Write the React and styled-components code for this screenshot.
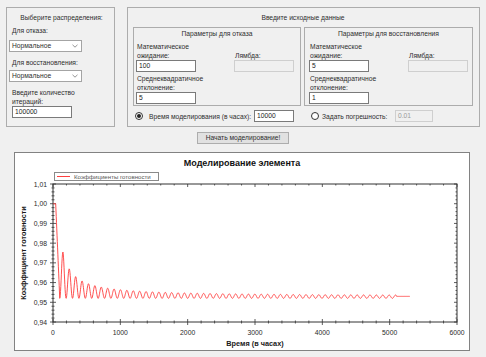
import React from "react"
import styled, { createGlobalStyle } from "styled-components"

const GlobalStyle = createGlobalStyle`
  html, body {
    margin: 0;
    padding: 0;
    background: #f0f0f0;
  }
  body {
    font-family: "Liberation Sans", Arial, sans-serif;
    font-size: 6.7px;
    color: #2e2e2e;
  }
`

const Window = styled.div`
  width: 486px;
  height: 357px;
  overflow: hidden;
  box-sizing: border-box;
  padding: 7px 6px 0 6px;
  display: flex;
  flex-direction: column;
`
const TopRow = styled.div`
  display: flex;
  gap: 12px;
  height: 120px;
`
const Group = styled.div`
  box-sizing: border-box;
  width: ${p => p.$w}px;
  height: 100%;
  border: 1px solid #acacac;
  display: flex;
  flex-direction: column;
  padding: 5px ${p => p.$pr || 0}px 0 ${p => p.$pl || 0}px;
`
const GroupTitle = styled.div`
  line-height: 9px;
  text-align: center;
  white-space: nowrap;
`
const Label = styled.div`
  line-height: ${p => p.$lh || 8.5}px;
  margin-top: ${p => p.$mt || 0}px;
  margin-left: ${p => p.$ml || 0}px;
  white-space: nowrap;
  align-self: ${p => p.$end ? "end" : "auto"};
`
const Combo = styled.div`
  box-sizing: border-box;
  width: 73px;
  height: 12px;
  margin-top: ${p => p.$mt || 0}px;
  background: #fff;
  border: 1px solid #a4a4a4;
  display: flex;
  align-items: center;
  justify-content: space-between;
  padding: 0 3px 0 2px;
  line-height: 10px;
`
const TextBox = styled.div`
  box-sizing: border-box;
  width: ${p => p.$w || 60}px;
  height: 12px;
  margin-top: ${p => p.$mt || 0}px;
  margin-left: ${p => p.$ml || 0}px;
  background: ${p => p.$disabled ? "#f0f0f0" : "#fff"};
  border: 1px solid ${p => p.$disabled ? "#cfcfcf" : "#7a7a7a"};
  color: ${p => p.$disabled ? "#9a9a9a" : "#1a1a1a"};
  padding-left: 2px;
  line-height: 10px;
  flex-shrink: 0;
`
const BoxRow = styled.div`
  display: flex;
  gap: 3px;
  margin-top: 5px;
`
const ParamBox = styled.div`
  box-sizing: border-box;
  width: ${p => p.$w}px;
  height: 79px;
  border: 1px solid #acacac;
  padding-top: 1px;
`
const BoxTitle = styled.div`
  line-height: 10px;
  text-align: center;
  white-space: nowrap;
`
const ParamGrid = styled.div`
  display: grid;
  grid-template-columns: 60px 60px;
  column-gap: ${p => p.$gap}px;
  margin-top: 4px;
  padding-left: ${p => p.$pl}px;
`
const GridLabel = styled(Label)`
  padding-left: 1px;
  grid-column: ${p => p.$col || 1};
`
const RadioRow = styled.div`
  display: grid;
  grid-template-columns: 168px 169px;
  column-gap: 3px;
  margin-top: 4px;
  height: 12px;
`
const RadioCell = styled.div`
  display: flex;
  align-items: center;
  padding-left: ${p => p.$pl}px;
`
const Radio = styled.span`
  box-sizing: border-box;
  width: 8px;
  height: 8px;
  border-radius: 50%;
  border: 1px solid #333;
  background: #fff;
  display: flex;
  align-items: center;
  justify-content: center;
  flex-shrink: 0;
  &::after {
    content: "";
    width: 4px;
    height: 4px;
    border-radius: 50%;
    background: ${p => p.$checked ? "#222" : "transparent"};
  }
`
const RadioText = styled.span`
  width: ${p => p.$w}px;
  margin-left: ${p => p.$gap}px;
  white-space: nowrap;
  flex-shrink: 0;
`
const ButtonRow = styled.div`
  display: flex;
  justify-content: center;
  margin-top: 5px;
`
const Button = styled.div`
  box-sizing: border-box;
  width: 92px;
  height: 12px;
  background: #e1e1e1;
  border: 1px solid #adadad;
  text-align: center;
  line-height: 10px;
  white-space: nowrap;
`
const ChartPanel = styled.div`
  box-sizing: border-box;
  margin: 8px 0 0 8px;
  width: 456px;
  height: 199px;
  border: 1px solid #828282;
  background: #fff;
  svg {
    display: block;
  }
`

function Chevron() {
  return (
    <svg width="6" height="4" viewBox="0 0 6 4">
      <path d="M0.5 0.8 L3 3.2 L5.5 0.8" fill="none" stroke="#7a7a7a" strokeWidth="0.8" />
    </svg>
  )
}

const PX0 = 38, PX1 = 442, PY0 = 31, PY1 = 169
const xs = t => PX0 + t / 6000 * (PX1 - PX0)
const ys = v => PY0 + (1.01 - v) / 0.07 * (PY1 - PY0)

function seriesPath() {
  const pts = []
  for (let t = 0; t <= 5300; t += 4) {
    let v
    if (t < 40) v = 1
    else if (t < 100) v = 1 - (t - 40) / 60 * 0.048
    else if (t > 5100) v = 0.953
    else {
      const A = 0.001 + 0.0225 * Math.pow(150 / Math.max(t, 150), 1.0)
      v = 0.952 + A * (1 - Math.cos(2 * Math.PI * (t - 100) / 95)) / 2
    }
    pts.push(`${xs(t).toFixed(2)},${ys(v).toFixed(2)}`)
  }
  return "M" + pts.join(" L")
}

function Chart() {
  const ticks = []
  for (let i = 0; i <= 35; i++) {
    const y = PY0 + i * (PY1 - PY0) / 35
    const l = i % 5 === 0 ? 3 : 1.5
    ticks.push(<line key={"yl" + i} x1={PX0 - l} x2={PX0 + l} y1={y} y2={y} />)
    ticks.push(<line key={"yr" + i} x1={PX1 - l} x2={PX1} y1={y} y2={y} />)
  }
  for (let i = 0; i <= 30; i++) {
    const x = PX0 + i * (PX1 - PX0) / 30
    const l = i % 5 === 0 ? 3 : 1.5
    ticks.push(<line key={"xb" + i} x1={x} x2={x} y1={PY1 - l} y2={PY1 + l} />)
    ticks.push(<line key={"xt" + i} x1={x} x2={x} y1={PY0} y2={PY0 + l} />)
  }
  const yLabels = ["1,01", "1,00", "0,99", "0,98", "0,97", "0,96", "0,95", "0,94"]
  return (
    <svg width="454" height="197" fontFamily='"Liberation Sans", Arial, sans-serif'>
      <text x="227" y="13" textAnchor="middle" fontSize="9" fontWeight="bold" fill="#111">Моделирование элемента</text>
      <rect x="39.5" y="19.5" width="104" height="8" fill="#fff" stroke="#8a8a8a" strokeWidth="1" />
      <line x1="42" x2="55" y1="23.5" y2="23.5" stroke="#ff4040" strokeWidth="1" />
      <text x="59" y="26" fontSize="6.1" fill="#555">Коэффициенты готовности</text>
      <rect x={PX0} y={PY0} width={PX1 - PX0} height={PY1 - PY0} fill="none" stroke="#333" strokeWidth="1" />
      <g stroke="#333" strokeWidth="0.8">{ticks}</g>
      {yLabels.map((l, i) => (
        <text key={l} x="32" y={PY0 + i * (PY1 - PY0) / 7 + 2.5} textAnchor="end" fontSize="6.8" fill="#2a2a2a">{l}</text>
      ))}
      {[0, 1000, 2000, 3000, 4000, 5000, 6000].map(v => (
        <text key={v} x={xs(v)} y="182" textAnchor="middle" fontSize="6.8" fill="#2a2a2a">{v}</text>
      ))}
      <text x="240" y="193" textAnchor="middle" fontSize="7.3" fontWeight="bold" fill="#1a1a1a">Время (в часах)</text>
      <text x="0" y="0" transform="translate(11 100) rotate(-90)" textAnchor="middle" fontSize="7.3" fontWeight="bold" fill="#1a1a1a">Коэффициент готовности</text>
      <path d={seriesPath()} fill="none" stroke="#ff3b3b" strokeWidth="0.9" />
    </svg>
  )
}

function Params({ pl, gap, mean, sd }) {
  return (
    <ParamGrid $pl={pl} $gap={gap}>
      <GridLabel>Математическое<br />ожидание:</GridLabel>
      <GridLabel $col={2} $end>Лямбда:</GridLabel>
      <TextBox>{mean}</TextBox>
      <TextBox $disabled />
      <GridLabel $mt={3}>Среднеквадратичное<br />отклонение:</GridLabel>
      <TextBox style={{ gridColumn: 1 }}>{sd}</TextBox>
    </ParamGrid>
  )
}

export default function App() {
  return (
    <Window>
      <GlobalStyle />
      <TopRow>
        <Group $w={109} $pl={2}>
          <GroupTitle>Выберите распределения:</GroupTitle>
          <Label $mt={5} $ml={3}>Для отказа:</Label>
          <Combo $mt={4}>Нормальное<Chevron /></Combo>
          <Label $mt={7} $ml={3}>Для восстановления:</Label>
          <Combo $mt={3}>Нормальное<Chevron /></Combo>
          <Label $mt={7} $ml={3}>Введите количество<br />итераций:</Label>
          <TextBox $ml={3}>100000</TextBox>
        </Group>
        <Group $w={353} $pl={5} $pr={6}>
          <GroupTitle>Введите исходные данные</GroupTitle>
          <BoxRow>
            <ParamBox $w={168}>
              <BoxTitle>Параметры для отказа</BoxTitle>
              <Params pl={2} gap={38} mean="100" sd="5" />
            </ParamBox>
            <ParamBox $w={169}>
              <BoxTitle>Параметры для восстановления</BoxTitle>
              <Params pl={4} gap={39} mean="5" sd="1" />
            </ParamBox>
          </BoxRow>
          <RadioRow>
            <RadioCell $pl={2}>
              <Radio $checked />
              <RadioText $gap={6} $w={105}>Время моделирования (в часах):</RadioText>
              <TextBox $w={40}>10000</TextBox>
            </RadioCell>
            <RadioCell $pl={7}>
              <Radio />
              <RadioText $gap={3} $w={73}>Задать погрешность:</RadioText>
              <TextBox $w={38} $disabled>0.01</TextBox>
            </RadioCell>
          </RadioRow>
        </Group>
      </TopRow>
      <ButtonRow>
        <Button>Начать моделирование!</Button>
      </ButtonRow>
      <ChartPanel>
        <Chart />
      </ChartPanel>
    </Window>
  )
}
